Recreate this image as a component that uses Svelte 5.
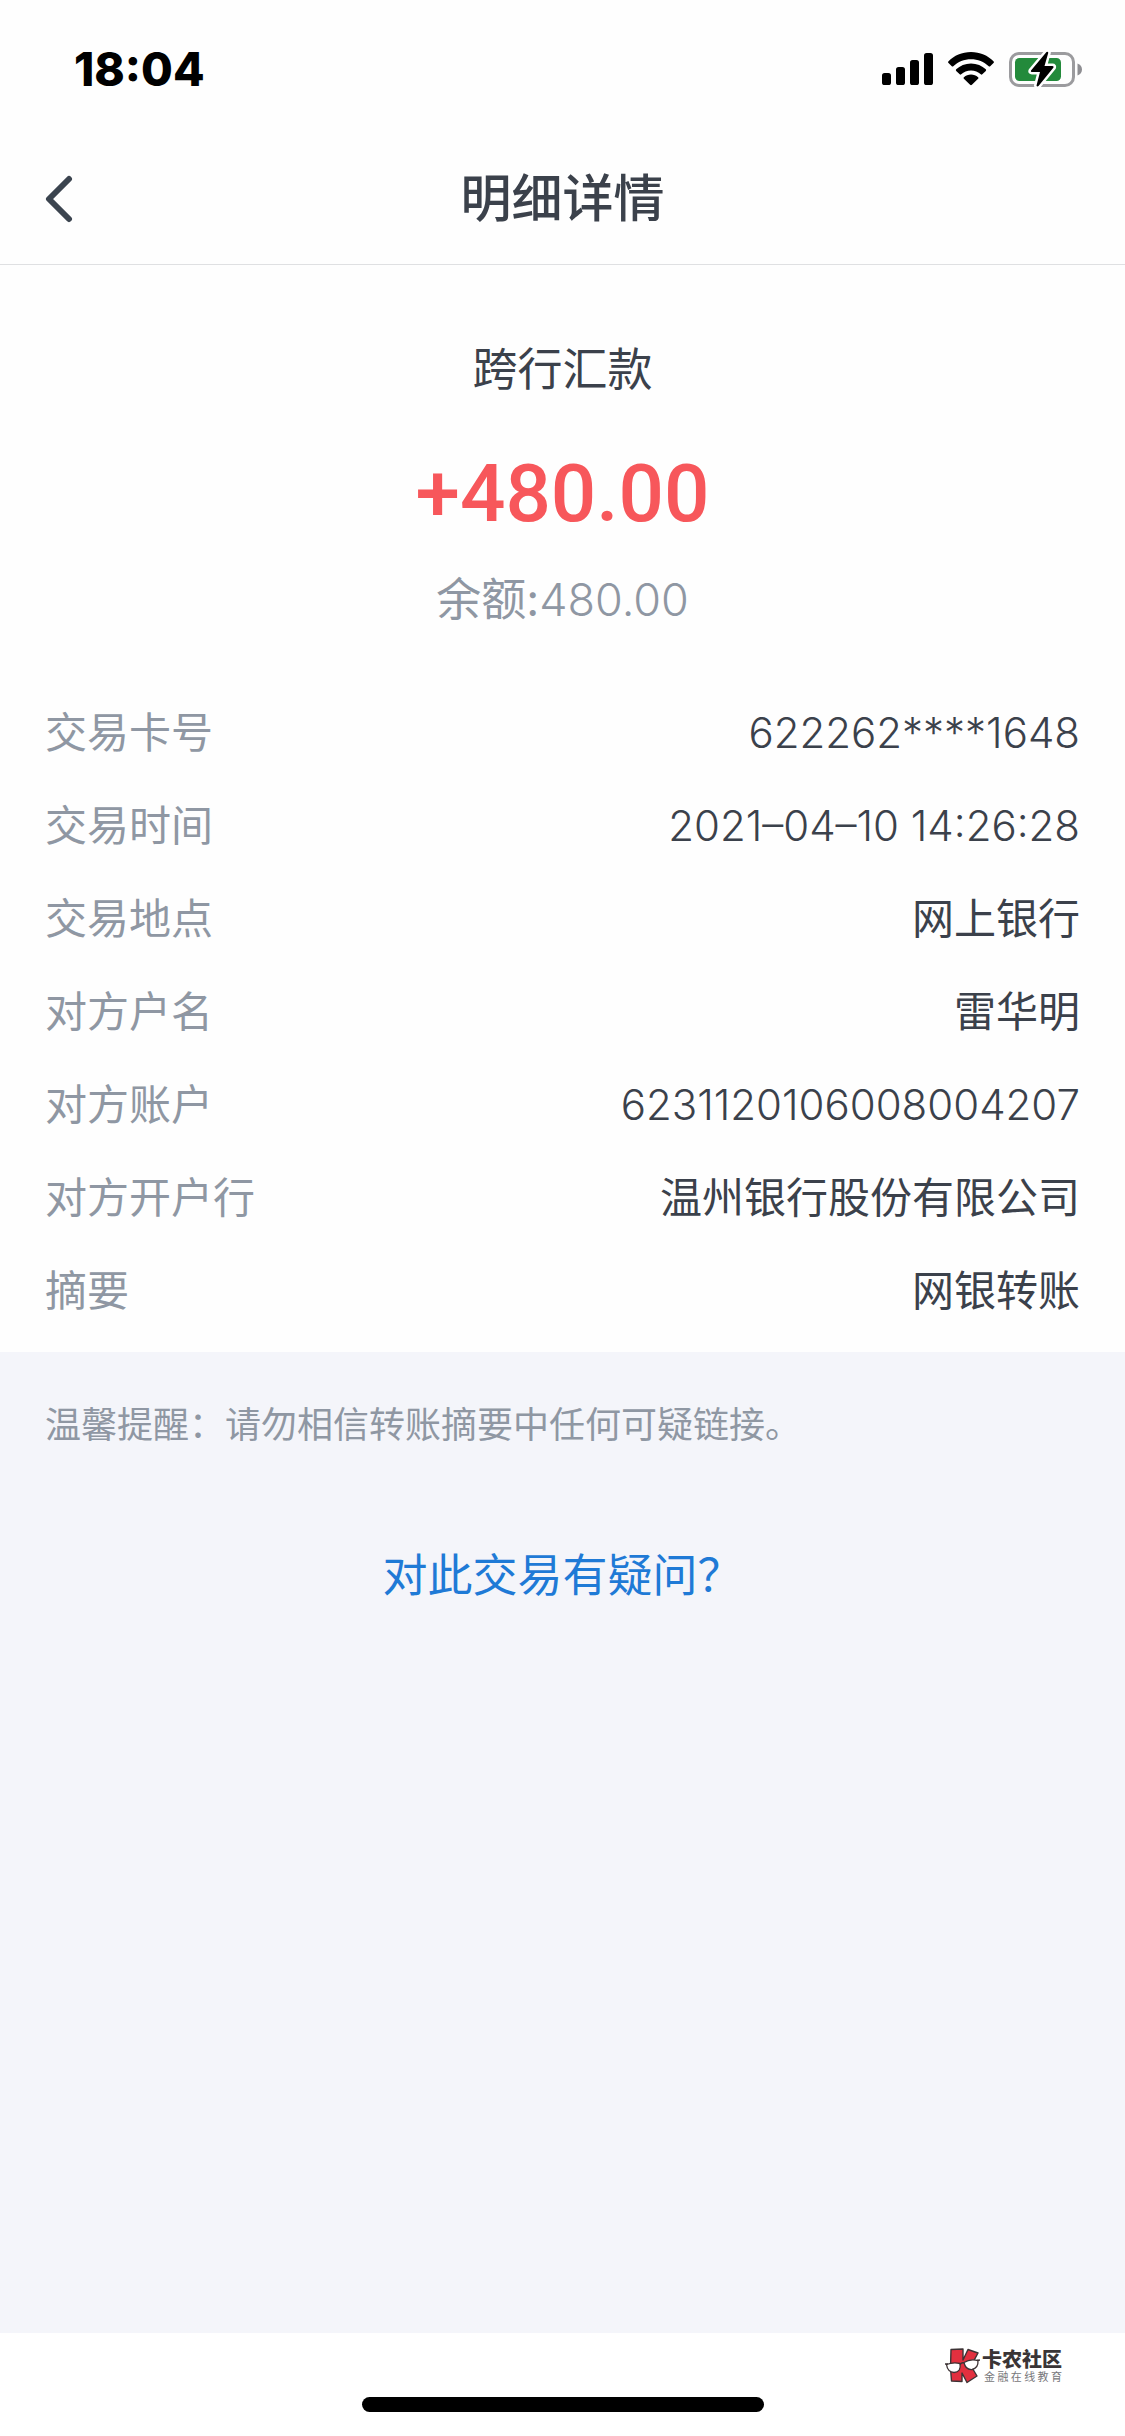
<script>
  const clock = '18:04';

  const record = {
    type: '跨行汇款',
    amount: '+480.00',
    balance: '480.00',
  };

  const rows = [
    { label: '交易卡号', value: '622262****1648', numeric: true },
    { label: '交易时间', value: '2021–04–10 14:26:28', numeric: true },
    { label: '交易地点', value: '网上银行' },
    { label: '对方户名', value: '雷华明' },
    { label: '对方账户', value: '6231120106008004207', numeric: true },
    { label: '对方开户行', value: '温州银行股份有限公司' },
    { label: '摘要', value: '网银转账' },
  ];
</script>

<div class="screen">
  <div class="status">
    <span class="clock">{clock}</span>
    <div class="indicators">
      <svg width="51" height="34" viewBox="0 0 51 34" aria-hidden="true">
        <rect x="0" y="21" width="9" height="12" rx="2.6" />
        <rect x="14" y="15" width="9" height="18" rx="2.6" />
        <rect x="28" y="8" width="9" height="25" rx="2.6" />
        <rect x="42" y="1" width="9" height="32" rx="2.6" />
      </svg>
      <svg width="46" height="34" viewBox="0 0 46 34" aria-hidden="true">
        <path d="M23 0C32 0 40 3.500 45.500 9.300Q46.300 10.200 45.500 11L42.200 14.200Q41.500 14.900 40.700 14.200C36 9.700 29.800 7.200 23 7.200S10 9.700 5.300 14.200Q4.500 14.900 3.800 14.200L.5 11Q-.3 10.200.5 9.300C6 3.500 14 0 23 0Z" />
        <path d="M23 11.400C28.800 11.400 34 13.600 37.800 17.300Q38.600 18.100 37.800 18.900L34.300 22.300Q33.600 23 32.800 22.300C30.200 19.900 26.800 18.500 23 18.500S15.800 19.900 13.200 22.300Q12.400 23 11.700 22.300L8.200 18.900Q7.400 18.100 8.200 17.300C12 13.600 17.200 11.400 23 11.400Z" />
        <path d="M23 22.600C25.700 22.600 28.200 23.600 30.100 25.200Q31 26 30.100 26.800L23.900 32.800Q23 33.500 22.100 32.800L15.900 26.800Q15 26 15.900 25.200C17.800 23.600 20.300 22.600 23 22.600Z" />
      </svg>
      <svg width="73" height="38" viewBox="0 0 73 38" aria-hidden="true">
        <rect x="1.500" y="3.500" width="63" height="32" rx="8.500" fill="none" stroke="#9b9b9e" stroke-width="3" />
        <path d="M68.500 13.500C71.300 14.400 73 16.700 73 19.500S71.300 24.600 68.500 25.500Z" fill="#8e8e92" />
        <rect x="6" y="8" width="46" height="23" rx="4.500" fill="#238a3b" />
        <path d="M37.500 2L22 20.500Q21.300 22 23 22H31L27.500 35.500Q28 37 29.500 36L44.500 17.500Q45 16 43.500 16H35.500L39.300 2.800Q38.800 1 37.500 2Z" fill="#000" stroke="#fff" stroke-width="5" paint-order="stroke" />
      </svg>
    </div>
  </div>

  <header class="nav">
    <button class="back" type="button" aria-label="返回">
      <svg width="28" height="48" viewBox="0 0 28 48" aria-hidden="true">
        <path d="M24 4L4 24L24 44" fill="none" stroke="#3b444f" stroke-width="6" stroke-linecap="round" stroke-linejoin="round" />
      </svg>
    </button>
    <h1>明细详情</h1>
  </header>

  <main>
    <section class="summary">
      <p class="type">{record.type}</p>
      <p class="amount">{record.amount}</p>
      <p class="balance">余额:<span class="numeric">{record.balance}</span></p>
    </section>

    <dl class="details">
      {#each rows as row}
        <div class="row">
          <dt>{row.label}</dt>
          <dd class:numeric={row.numeric}>{row.value}</dd>
        </div>
      {/each}
    </dl>

    <section class="extra">
      <p class="tip">温馨提醒：请勿相信转账摘要中任何可疑链接。</p>
      <a class="question" href="#question">对此交易有疑问？</a>
    </section>
  </main>

  <footer>
    <div class="brand">
      <svg width="35" height="36" viewBox="0 0 35 36" aria-hidden="true">
        <path d="M6 1.500L18 1V12L23 1.500L33 5L26 18L32 28L22 34.500L17 25V33.500L6.500 33L5.500 20Z" fill="#e2303f" stroke="#3d3335" stroke-width="1.400" stroke-linejoin="round" />
        <path d="M1.500 16.500Q8 14 15 15.500Q16.500 24 9 24.500Q2.500 24 1.500 16.500Z" fill="#fff" stroke="#3d3335" stroke-width="1.300" />
        <path d="M19 14.500Q25 10.500 33 12.500Q33.500 20 27 21.500Q20.500 22 19 14.500Z" fill="#fff" stroke="#3d3335" stroke-width="1.300" />
        <path d="M0 16L3 16M15 16.500Q17 14 19 15M32 12.500L35 12" fill="none" stroke="#3d3335" stroke-width="1.600" />
      </svg>
      <div class="brand-text">
        <span class="brand-name">卡农社区</span>
        <span class="brand-sub">金融在线教育</span>
      </div>
    </div>
    <div class="home-bar"></div>
  </footer>
</div>

<style>
  :global(body) {
    margin: 0;
    background: #fff;
  }
  .screen {
    display: flex;
    flex-direction: column;
    min-height: 100vh;
    background: #fefefe;
    color: #3b414b;
    font-family: Inter, 'Noto Sans CJK SC', sans-serif;
  }
  h1, p, dl, dd {
    margin: 0;
  }
  svg {
    display: block;
  }
  .numeric {
    font-weight: 300;
  }

  .status {
    display: flex;
    align-items: center;
    justify-content: space-between;
    height: 138px;
    padding: 0 43px 0 74px;
    color: #000;
  }
  .clock {
    font-size: 46px;
    font-weight: 800;
    line-height: 54px;
  }
  .indicators {
    display: flex;
    align-items: center;
    gap: 15px;
  }

  .nav {
    display: grid;
    grid-template-columns: 120px 1fr 120px;
    align-items: center;
    height: 121px;
    padding-bottom: 5px;
    border-bottom: 1px solid #dfe0e2;
  }
  .back {
    padding: 15px 45px;
    border: 0;
    background: none;
    cursor: pointer;
  }
  h1 {
    font-size: 51px;
    font-weight: 500;
    line-height: 72px;
    text-align: center;
  }

  main {
    flex: 1;
    display: flex;
    flex-direction: column;
  }
  .summary {
    display: flex;
    flex-direction: column;
    align-items: center;
    padding: 73px 45px 54px;
  }
  .type,
  .balance {
    font-size: 45px;
    line-height: 64px;
  }
  .amount {
    margin: 44px 0 26px;
    color: #f7575b;
    font-family: Roboto, sans-serif;
    font-size: 80px;
    font-weight: 500;
    line-height: 96px;
  }
  .balance {
    color: #8f97a3;
  }

  .details {
    padding: 0 45px 15px;
  }
  .row {
    display: flex;
    justify-content: space-between;
    font-size: 42px;
    line-height: 93px;
  }
  dt {
    color: #8f97a3;
  }
  dd {
    text-align: right;
  }

  .extra {
    flex: 1;
    display: flex;
    flex-direction: column;
    padding: 46px 45px;
    background: #f4f5fa;
  }
  .tip {
    color: #8f97a3;
    font-size: 36px;
    line-height: 54px;
  }
  .question {
    align-self: center;
    margin-top: 92px;
    color: #1f7ad6;
    font-size: 45px;
    line-height: 64px;
    text-decoration: none;
  }

  footer {
    display: flex;
    flex-direction: column;
    align-items: center;
    gap: 13px;
    padding: 15px 63px 24px;
    background: #fff;
  }
  .brand {
    align-self: flex-end;
    display: flex;
    align-items: center;
    gap: 2px;
    height: 36px;
  }
  .brand-text {
    width: 80px;
    color: #3a3536;
  }
  .brand-name,
  .brand-sub {
    display: block;
    text-align: justify;
    text-align-last: justify;
    white-space: nowrap;
  }
  .brand-name {
    font-size: 20px;
    font-weight: 900;
    line-height: 22px;
  }
  .brand-sub {
    padding-left: 2px;
    color: #77777a;
    font-size: 11px;
    line-height: 12px;
  }
  .home-bar {
    width: 402px;
    max-width: 100%;
    height: 15px;
    border-radius: 8px;
    background: #000;
  }
</style>
